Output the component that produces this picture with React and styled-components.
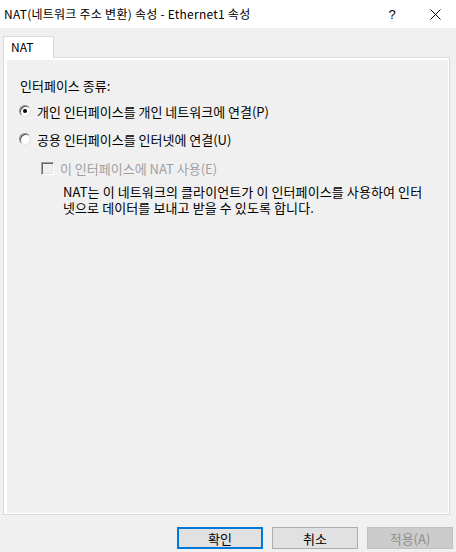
import React from 'react';
import styled, { createGlobalStyle } from 'styled-components';

const GlobalStyle = createGlobalStyle`
  html, body {
    margin: 0;
    padding: 0;
    background: #f0f0f0;
  }
  body {
    font-family: 'Noto Sans CJK KR', 'Noto Sans', sans-serif;
    font-size: 13px;
    color: #000;
  }
`;

const Window = styled.div`
  width: 456px;
  height: 552px;
  display: flex;
  flex-direction: column;
  background: #f0f0f0;
  overflow: hidden;
`;

const TitleBar = styled.div`
  height: 28px;
  background: #fff;
  display: flex;
  align-items: center;
  padding-left: 4px;
  flex-shrink: 0;
`;

const Title = styled.div`
  flex: 1;
  font-size: 12px;
  letter-spacing: 0.25px;
  line-height: 16px;
  white-space: nowrap;
`;

const TitleButton = styled.div`
  width: ${p => p.$w}px;
  height: 28px;
  display: flex;
  align-items: center;
  justify-content: center;
  font-family: 'Liberation Sans', sans-serif;
  font-size: 13px;
`;

const Body = styled.div`
  flex: 1;
  display: flex;
  flex-direction: column;
  padding: 8px 6px 3px 3px;
`;

const TabStrip = styled.div`
  display: flex;
  height: 22px;
  margin-bottom: -1px;
  position: relative;
  z-index: 1;
`;

const Tab = styled.div`
  width: 51px;
  box-sizing: border-box;
  border: 1px solid #d9d9d9;
  border-bottom: none;
  background: #fff;
  padding-left: 7px;
  line-height: 20px;
  font-size: 12px;
`;

const Panel = styled.div`
  flex: 1;
  border: 1px solid #d9d9d9;
  background: #fff;
  padding: 2px 1px 1px 3px;
  display: flex;
`;

const Page = styled.div`
  flex: 1;
  background: #f0f0f0;
  padding: 18px 12px 0 13px;
  display: flex;
  flex-direction: column;
`;

const GroupLabel = styled.div`
  line-height: 16px;
  margin-bottom: 9px;
`;

const OptionRow = styled.div`
  display: flex;
  align-items: center;
  height: 16px;
  margin-bottom: ${p => p.$mb || 0}px;
  margin-left: ${p => p.$indent || 0}px;
  color: ${p => (p.$disabled ? '#a0a0a0' : '#000')};
  gap: ${p => p.$gap || 6}px;
  white-space: nowrap;
`;

const Radio = styled.span`
  width: 12px;
  height: 12px;
  box-sizing: border-box;
  border-radius: 50%;
  border: 1px solid;
  border-color: #8a8a8a #e3e3e3 #e3e3e3 #8a8a8a;
  background: #fff;
  box-shadow: inset 1px 1px 0 #5a5a5a;
  display: flex;
  align-items: center;
  justify-content: center;
  margin-left: -1px;

  &::after {
    content: '';
    width: 4px;
    height: 4px;
    border-radius: 50%;
    background: ${p => (p.$checked ? '#000' : 'transparent')};
  }
`;

const CheckBox = styled.span`
  width: 13px;
  height: 13px;
  box-sizing: border-box;
  border: 1px solid;
  border-color: #a0a0a0 #fff #fff #a0a0a0;
  box-shadow: inset 1px 1px 0 #696969, inset -1px -1px 0 #e3e3e3;
  background: #f0f0f0;
`;

const Description = styled.p`
  margin: 0 0 0 43px;
  width: 364px;
  line-height: 16px;
  letter-spacing: 0.1px;
`;

const ButtonRow = styled.div`
  display: flex;
  justify-content: flex-end;
  gap: 9px;
  margin-top: 12px;
  margin-right: -6px;
  padding-right: 3px;
`;

const Button = styled.button`
  width: 86px;
  height: 22px;
  box-sizing: border-box;
  font-family: 'Noto Sans CJK KR', 'Noto Sans', sans-serif;
  font-size: 13px;
  padding: 0;
  background: ${p => (p.disabled ? '#cccccc' : '#e1e1e1')};
  color: ${p => (p.disabled ? '#8f8f8f' : '#000')};
  border: ${p => (p.$primary ? '2px solid #0078d7' : p.disabled ? '1px solid #bfbfbf' : '1px solid #adadad')};
`;

const CloseIcon = () => (
  <svg width="11" height="11" viewBox="0 0 11 11">
    <path d="M0.5 0.5 L10.5 10.5 M10.5 0.5 L0.5 10.5" stroke="#000" strokeWidth="1" fill="none" />
  </svg>
);

export default function App() {
  return (
    <>
      <GlobalStyle />
      <Window>
        <TitleBar>
          <Title>NAT(네트워크 주소 변환) 속성 - Ethernet1 속성</Title>
          <TitleButton $w={30}>?</TitleButton>
          <TitleButton $w={7} />
          <TitleButton $w={42}>
            <CloseIcon />
          </TitleButton>
        </TitleBar>
        <Body>
          <TabStrip>
            <Tab>NAT</Tab>
          </TabStrip>
          <Panel>
            <Page>
              <GroupLabel>인터페이스 종류:</GroupLabel>
              <OptionRow $mb={12}>
                <Radio $checked />
                <span>개인 인터페이스를 개인 네트워크에 연결(P)</span>
              </OptionRow>
              <OptionRow $mb={13}>
                <Radio />
                <span>공용 인터페이스를 인터넷에 연결(U)</span>
              </OptionRow>
              <OptionRow $mb={8} $indent={21} $gap={6} $disabled>
                <CheckBox />
                <span>이 인터페이스에 NAT 사용(E)</span>
              </OptionRow>
              <Description>
                NAT는 이 네트워크의 클라이언트가 이 인터페이스를 사용하여 인터넷으로 데이터를 보내고 받을 수 있도록 합니다.
              </Description>
            </Page>
          </Panel>
          <ButtonRow>
            <Button $primary>확인</Button>
            <Button>취소</Button>
            <Button disabled>적용(A)</Button>
          </ButtonRow>
        </Body>
      </Window>
    </>
  );
}
